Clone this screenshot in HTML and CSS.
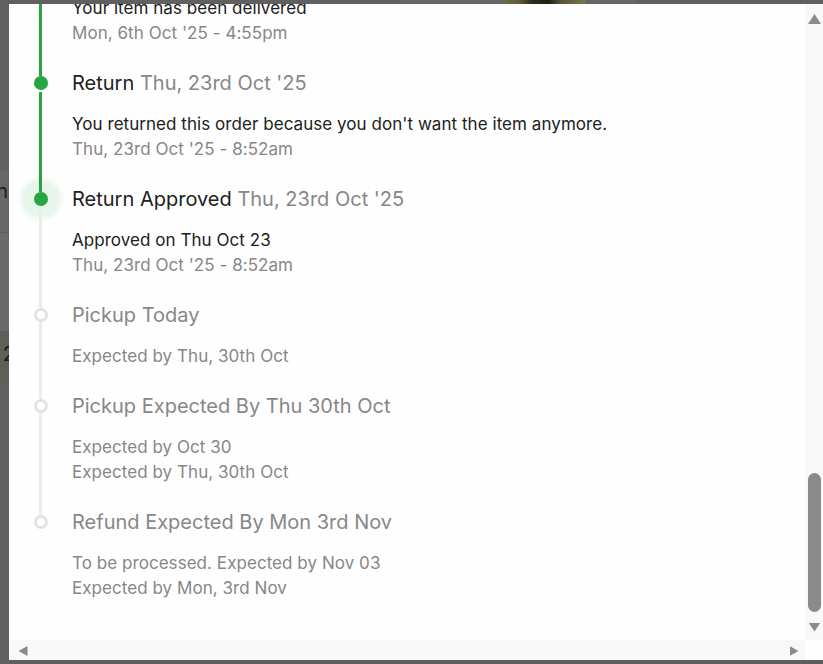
FILE: index.html
```html
<!DOCTYPE html>
<html lang="en">
<head>
<meta charset="utf-8">
<title>Order tracking</title>
<link rel="stylesheet" href="styles.css">
</head>
<body>
<div class="screen">
  <div class="backdrop-left">
    <div class="bl bl-a"></div>
    <div class="bl bl-b"><span class="peek">n</span></div>
    <div class="bl bl-c"></div>
    <div class="bl bl-d"><span class="peek peek-num">2</span></div>
    <div class="bl bl-e"></div>
  </div>
  <div class="main">
    <div class="backdrop-top">
      <div class="bt bt-a"></div>
      <div class="bt bt-b"></div>
      <div class="bt bt-photo"></div>
      <div class="bt bt-b2"></div>
      <div class="bt bt-c"></div>
    </div>
    <div class="panel">
      <div class="viewport">
        <ol class="timeline">
          <li class="step done">
            <div class="rail"><span class="seg seg-top none"></span><span class="dot"></span><span class="seg seg-bottom green"></span></div>
            <div class="content">
              <div class="title">Order Confirmed <span class="when">Sat, 4th Oct '25</span></div>
              <div class="body">
                <p class="desc">Your Order has been placed.</p>
                <p class="time">Sat, 4th Oct '25 - 10:12am</p>
              </div>
            </div>
          </li>
          <li class="step done">
            <div class="rail"><span class="seg seg-top green"></span><span class="dot"></span><span class="seg seg-bottom green"></span></div>
            <div class="content">
              <div class="title">Shipped <span class="when">Sun, 5th Oct '25</span></div>
              <div class="body">
                <p class="desc">Your item has been shipped.</p>
                <p class="time">Sun, 5th Oct '25 - 8:30am</p>
              </div>
            </div>
          </li>
          <li class="step done">
            <div class="rail"><span class="seg seg-top green"></span><span class="dot"></span><span class="seg seg-bottom green"></span></div>
            <div class="content">
              <div class="title">Delivered <span class="when">Mon, 6th Oct '25</span></div>
              <div class="body">
                <p class="desc">Your item has been delivered</p>
                <p class="time">Mon, 6th Oct '25 - 4:55pm</p>
              </div>
            </div>
          </li>
          <li class="step done">
            <div class="rail"><span class="seg seg-top green"></span><span class="dot"></span><span class="seg seg-bottom green gap"></span></div>
            <div class="content">
              <div class="title">Return <span class="when">Thu, 23rd Oct '25</span></div>
              <div class="body">
                <p class="desc">You returned this order because you don't want the item anymore.</p>
                <p class="time">Thu, 23rd Oct '25 - 8:52am</p>
              </div>
            </div>
          </li>
          <li class="step done current">
            <div class="rail"><span class="seg seg-top green"></span><span class="dot"></span><span class="seg seg-bottom gray"></span></div>
            <div class="content">
              <div class="title">Return Approved <span class="when">Thu, 23rd Oct '25</span></div>
              <div class="body">
                <p class="desc">Approved on Thu Oct 23</p>
                <p class="time">Thu, 23rd Oct '25 - 8:52am</p>
              </div>
            </div>
          </li>
          <li class="step pending">
            <div class="rail"><span class="seg seg-top gray"></span><span class="dot"></span><span class="seg seg-bottom gray"></span></div>
            <div class="content">
              <div class="title">Pickup Today</div>
              <div class="body">
                <p class="time">Expected by Thu, 30th Oct</p>
              </div>
            </div>
          </li>
          <li class="step pending">
            <div class="rail"><span class="seg seg-top gray"></span><span class="dot"></span><span class="seg seg-bottom gray"></span></div>
            <div class="content">
              <div class="title">Pickup Expected By Thu 30th Oct</div>
              <div class="body">
                <p class="desc">Expected by Oct 30</p>
                <p class="time">Expected by Thu, 30th Oct</p>
              </div>
            </div>
          </li>
          <li class="step pending last">
            <div class="rail"><span class="seg seg-top gray"></span><span class="dot"></span><span class="seg seg-bottom none"></span></div>
            <div class="content">
              <div class="title">Refund Expected By Mon 3rd Nov</div>
              <div class="body">
                <p class="desc">To be processed. Expected by Nov 03</p>
                <p class="time">Expected by Mon, 3rd Nov</p>
              </div>
            </div>
          </li>
        </ol>
      </div>
      <div class="vscroll">
        <div class="sb-btn sb-btn-v"><span class="tri tri-up"></span></div>
        <div class="sb-track"><div class="thumb"></div></div>
        <div class="sb-btn sb-btn-v"><span class="tri tri-down"></span></div>
      </div>
      <div class="hscroll">
        <div class="sb-btn sb-btn-h"><span class="tri tri-left"></span></div>
        <div class="sb-track-h"></div>
        <div class="sb-btn sb-btn-h"><span class="tri tri-right"></span></div>
      </div>
      <div class="corner"></div>
    </div>
    <div class="backdrop-bottom"></div>
  </div>
</div>
</body>
</html>
```

FILE: styles.css
```css
html, body {
  margin: 0;
  padding: 0;
}

body {
  width: 823px;
  height: 664px;
  overflow: hidden;
  background: #5f5f5f;
  font-family: Inter, "Noto Sans", "Liberation Sans", sans-serif;
  color: #212121;
}

.screen {
  display: flex;
  height: 664px;
}

/* dimmed page behind the sheet */
.backdrop-left {
  flex: none;
  width: 9px;
  display: flex;
  flex-direction: column;
  overflow: hidden;
}

.bl { flex: none; overflow: hidden; }
.bl-a { height: 170px; background: #606060; }
.bl-b { height: 62px; background: #676767; display: flex; align-items: center; justify-content: flex-end; }
.bl-c { height: 98px; background: #6a6a6a; border-top: 1px solid #5e5e5e; }
.bl-d { height: 53px; background: #5d5f59; display: flex; align-items: center; justify-content: flex-end; }
.bl-e { flex: 1; background: #606060; }

.peek {
  font-size: 20px;
  line-height: 20px;
  color: #1a1a1a;
  margin-right: 1px;
  margin-top: -20px;
}

.peek-num { margin-top: -8px; margin-right: -6px; }

.main {
  flex: 1;
  min-width: 0;
  display: flex;
  flex-direction: column;
}

.backdrop-top {
  flex: none;
  height: 4px;
  display: flex;
}

.bt { flex: none; }
.bt-a { width: 391px; background: #606060; }
.bt-b { width: 104px; background: #666666; }
.bt-photo { width: 81px; background: linear-gradient(90deg, #6f6d45 0, #5d5a38 20%, #2a2a22 35%, #1f1f1a 55%, #55543a 70%, #7a7748 100%); }
.bt-b2 { width: 51px; background: #666666; }
.bt-c { flex: 1; background: #606060; }

.backdrop-bottom {
  flex: none;
  height: 4px;
  background: #5e5e5e;
}

/* sheet */
.panel {
  flex: none;
  height: 656px;
  background: #fefefe;
  display: grid;
  grid-template-columns: 1fr 17px;
  grid-template-rows: 1fr 20px;
}

.viewport {
  min-height: 0;
  overflow: hidden;
  display: flex;
  flex-direction: column;
  justify-content: flex-end;
}

.timeline {
  flex: none;
  list-style: none;
  margin: 0;
  padding: 0 0 15px;
}

.step {
  display: grid;
  grid-template-columns: 63px 1fr;
}

.rail {
  display: flex;
  flex-direction: column;
  align-items: center;
}

.seg {
  flex: none;
  width: 3px;
}

.seg-top { height: 6px; }
.seg-bottom { flex: 1; }
.seg.green { background: #26a541; }
.seg.gray { background: #ececec; }
.seg.none { background: transparent; }
.seg.gap { margin-top: 2px; }

.dot {
  flex: none;
  width: 14px;
  height: 14px;
  border-radius: 50%;
  box-sizing: border-box;
}

.done .dot { background: #26a541; }

.current .dot {
  box-shadow: 0 0 4px 13px rgba(38, 165, 65, 0.1);
}

.pending .dot {
  background: #fff;
  border: 3px solid #e2e2e2;
}

.content {
  padding-bottom: 24px;
  min-width: 0;
}

.title {
  font-size: 20px;
  line-height: 26px;
  color: #212121;
  white-space: nowrap;
}

.when { color: #878787; }

.pending .title { color: #878787; }

.body {
  margin-top: 16px;
}

.body p {
  margin: 0;
  font-size: 17px;
  line-height: 25px;
  letter-spacing: 0.05px;
  white-space: nowrap;
}

.desc { color: #212121; }
.time { color: #878787; }
.pending .desc { color: #878787; }

/* scrollbars */
.vscroll {
  background: #f8f8f8;
  display: flex;
  flex-direction: column;
}

.sb-btn {
  flex: none;
  display: flex;
  align-items: center;
  justify-content: center;
}

.sb-btn-v { height: 20px; }

.sb-track {
  flex: 1;
  display: flex;
  flex-direction: column;
  justify-content: flex-end;
  align-items: center;
}

.thumb {
  width: 13px;
  height: 139px;
  margin-bottom: 8px;
  border-radius: 7px;
  background: #8b8b8b;
}

.hscroll {
  background: #f8f8f8;
  display: flex;
}

.sb-btn-h { width: 22px; }

.sb-track-h { flex: 1; }

.corner { background: #fefefe; }

.tri {
  display: block;
  background: #8b8b8b;
}

.tri-up {
  width: 13px;
  height: 10px;
  margin-top: 10px;
  clip-path: polygon(50% 0, 100% 100%, 0 100%);
}

.tri-down {
  width: 12px;
  height: 9px;
  margin-top: -6px;
  clip-path: polygon(0 0, 100% 0, 50% 100%);
}

.tri-left {
  width: 9px;
  height: 10px;
  margin-left: 6px;
  margin-top: 2px;
  clip-path: polygon(100% 0, 100% 100%, 0 50%);
}

.tri-right {
  width: 9px;
  height: 10px;
  margin-right: 2px;
  margin-top: 2px;
  clip-path: polygon(0 0, 100% 50%, 0 100%);
}
```
